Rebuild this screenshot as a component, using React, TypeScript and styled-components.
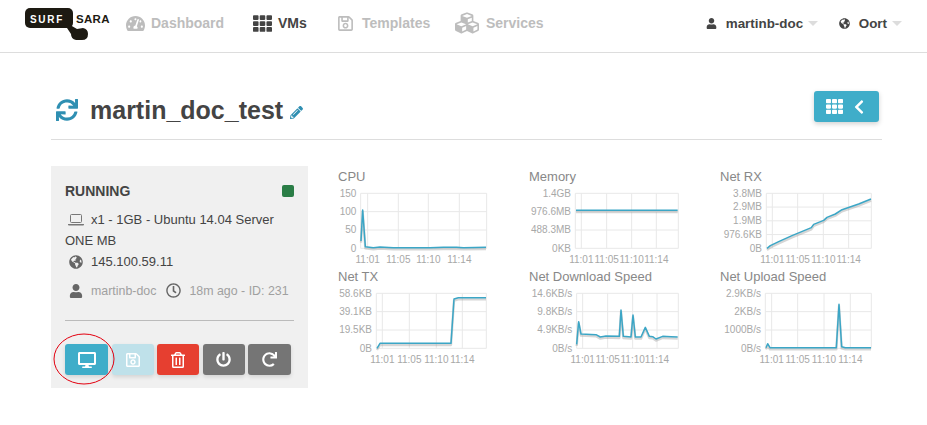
import styled, { createGlobalStyle } from 'styled-components';
import {
  FaTachometerAlt,
  FaTh,
  FaRegSave,
  FaCubes,
  FaUser,
  FaGlobeAmericas,
  FaSync,
  FaPencilAlt,
  FaChevronLeft,
  FaRegClock,
  FaDesktop,
  FaRegTrashAlt,
  FaPowerOff,
  FaRedo,
} from 'react-icons/fa';

const GlobalStyle = createGlobalStyle`
  html, body {
    margin: 0;
    padding: 0;
    background: #fff;
    font-family: "Liberation Sans", Arial, sans-serif;
    color: #444;
  }
`;

type ChartData = {
  title: string;
  left: number;
  right: number;
  xTicks: number[];
  yLabels: string[];
  line: string;
};

// coordinates are measured on a 3x grid, see the viewBox in Chart
const charts: ChartData[] = [
  {
    title: 'CPU',
    left: 92,
    right: 470,
    xTicks: [113, 205, 295, 388],
    yLabels: ['150', '100', '50', '0'],
    line: '93,228 98,135 106,245 130,248 150,246 190,248 300,248 340,247 380,247 400,248 468,247',
  },
  {
    title: 'Memory',
    left: 163,
    right: 472,
    xTicks: [181, 257, 332, 406],
    yLabels: ['1.4GB', '976.6MB', '488.3MB', '0KB'],
    line: '165,136 470,136',
  },
  {
    title: 'Net RX',
    left: 163,
    right: 478,
    xTicks: [181, 257, 334, 410],
    yLabels: ['3.8MB', '2.9MB', '1.9MB', '976.6KB', '0B'],
    line: '165,250 175,242 200,230 240,212 298,188 305,178 335,166 345,157 370,147 390,134 440,117 477,102',
  },
  {
    title: 'Net TX',
    left: 139,
    right: 469,
    xTicks: [157, 238, 319, 397],
    yLabels: ['58.6KB', '39.1KB', '19.5KB', '0B'],
    line: '141,250 150,235 363,235 372,102 385,98 468,98',
  },
  {
    title: 'Net Download Speed',
    left: 167,
    right: 472,
    xTicks: [185, 260, 335, 408],
    yLabels: ['14.6KB/s', '9.8KB/s', '4.9KB/s', '0B/s'],
    line: '167,238 173,170 180,207 225,209 238,216 255,213 295,214 300,135 307,214 330,216 336,150 343,216 360,216 373,187 385,214 395,215 405,222 425,214 450,215 470,216',
  },
  {
    title: 'Net Upload Speed',
    left: 160,
    right: 478,
    xTicks: [179, 257, 336, 415],
    yLabels: ['2.9KB/s', '2KB/s', '1000B/s', '0B/s'],
    line: '162,248 167,236 174,248 373,248 381,118 389,245 400,248 477,248',
  },
];

const xLabels = ['11:01', '11:05', '11:10', '11:14'];
const PLOT_TOP = 85;
const PLOT_BOTTOM = 250;

const Chart = ({ data }: { data: ChartData }) => {
  const step = (PLOT_BOTTOM - PLOT_TOP) / (data.yLabels.length - 1);
  return (
    <ChartCell>
      <ChartTitle>{data.title}</ChartTitle>
      <svg width="180" height="80" viewBox="0 60 540 240">
        <g stroke="#e8e8e8" strokeWidth="3" fill="none">
          {data.yLabels.map((_, i) => (
            <line
              key={i}
              x1={data.left}
              x2={data.right}
              y1={PLOT_TOP + i * step}
              y2={PLOT_TOP + i * step}
            />
          ))}
          <line x1={data.left} x2={data.left} y1={PLOT_TOP} y2={PLOT_BOTTOM} />
          <line x1={data.right} x2={data.right} y1={PLOT_TOP} y2={PLOT_BOTTOM} />
          {data.xTicks.map((x) => (
            <line key={x} x1={x} x2={x} y1={PLOT_TOP} y2={PLOT_BOTTOM} />
          ))}
        </g>
        <polyline
          points={data.line}
          fill="none"
          stroke="#999"
          strokeWidth="7"
          strokeOpacity="0.4"
          strokeLinejoin="round"
          transform="translate(0 5)"
        />
        <polyline
          points={data.line}
          fill="none"
          stroke="#3ba6c6"
          strokeWidth="4.5"
          strokeLinejoin="round"
        />
        <g fill="#a8a8a8" fontSize="30">
          {data.yLabels.map((label, i) => (
            <text
              key={label}
              x={data.left - 13}
              y={PLOT_TOP + i * step + 10}
              textAnchor="end"
            >
              {label}
            </text>
          ))}
          {data.xTicks.map((x, i) => (
            <text key={x} x={x} y={293} textAnchor="middle">
              {xLabels[i]}
            </text>
          ))}
        </g>
      </svg>
    </ChartCell>
  );
};

const Logo = () => (
  <LogoSvg width="86" height="34" viewBox="0 0 86 34">
    <rect x="0" y="0" width="48" height="20" rx="5" fill="#1d1a12" />
    <path d="M40 14 L52 21 L58 20 Q63 21 63 26 Q63 32 57 32 L51 32 Q46 31 46 26 L42 20 Z" fill="#1d1a12" />
    <text x="5" y="14.5" fontSize="10" fontWeight="700" letterSpacing="1.7" fill="#fff">
      SURF
    </text>
    <text x="51" y="14.5" fontSize="11.5" fontWeight="700" letterSpacing="0.3" fill="#1d1a12">
      SARA
    </text>
  </LogoSvg>
);

const LaptopIcon = () => (
  <svg width="16" height="12" viewBox="0 0 16 12">
    <rect x="2.5" y="0.5" width="11" height="8" rx="1" fill="none" stroke="currentColor" />
    <path d="M0 10h16v0.5q0 1-1 1H1q-1 0-1-1z" fill="currentColor" />
  </svg>
);

const App = () => {
  return (
    <Page>
      <GlobalStyle />
      <NavBar>
        <Logo />
        <NavLinks>
          <NavLink $gap={6} $width={127}>
            <FaTachometerAlt size={19} />
            Dashboard
          </NavLink>
          <NavLink $active $gap={6} $width={84}>
            <FaTh size={19} />
            VMs
          </NavLink>
          <NavLink $gap={8} $width={118}>
            <FaRegSave size={17} />
            Templates
          </NavLink>
          <NavLink $gap={7}>
            <FaCubes size={24} />
            Services
          </NavLink>
        </NavLinks>
        <NavRight>
          <NavMenu $width={133}>
            <FaUser size={11} />
            martinb-doc
            <Caret />
          </NavMenu>
          <NavMenu>
            <FaGlobeAmericas size={11} />
            Oort
            <Caret />
          </NavMenu>
        </NavRight>
      </NavBar>

      <Main>
        <Header>
          <StateIcon />
          <Title>martin_doc_test</Title>
          <EditIcon />
          <BackButton>
            <FaTh size={17} />
            <FaChevronLeft size={16} />
          </BackButton>
        </Header>

        <Content>
          <Panel>
            <PanelHead>
              RUNNING
              <StatusDot />
            </PanelHead>
            <InfoText>
              <LaptopIcon />
              x1 - 1GB - Ubuntu 14.04 Server ONE MB
            </InfoText>
            <IpRow>
              <FaGlobeAmericas size={14} />
              145.100.59.11
            </IpRow>
            <MetaRow>
              <FaUser size={14} />
              <span>martinb-doc</span>
              <FaRegClock size={15} />
              <span>18m ago - ID: 231</span>
            </MetaRow>
            <PanelRule />
            <Actions>
              <ActionButton $bg="#3fadc9" $width={43}>
                <FaDesktop size={18} />
              </ActionButton>
              <ActionButton $bg="#bfe1ea" $width={42}>
                <FaRegSave size={16} />
              </ActionButton>
              <ActionButton $bg="#e63f30" $width={42}>
                <FaRegTrashAlt size={16} />
              </ActionButton>
              <ActionButton $bg="#757575" $width={42}>
                <FaPowerOff size={15} />
              </ActionButton>
              <ActionButton $bg="#757575" $width={43}>
                <FaRedo size={15} />
              </ActionButton>
            </Actions>
            <Ring width="62" height="52" viewBox="0 0 62 52">
              <ellipse cx="31" cy="26" rx="30" ry="25" fill="none" stroke="#e3000f" strokeWidth="1" />
            </Ring>
          </Panel>
          <ChartGrid>
            {charts.map((c) => (
              <Chart key={c.title} data={c} />
            ))}
          </ChartGrid>
        </Content>
      </Main>
    </Page>
  );
};

export default App;

const Page = styled.div`
  width: 927px;
  height: 425px;
  overflow: hidden;
`;

const NavBar = styled.nav`
  display: flex;
  align-items: center;
  height: 53px;
  padding: 0 25px 6px;
  box-sizing: border-box;
  border-bottom: 1px solid #ddd;
`;

const LogoSvg = styled.svg`
  flex: none;
  margin-top: 3px;
`;

const NavLinks = styled.div`
  display: flex;
  align-items: center;
  margin-left: 15px;
`;

const NavLink = styled.a<{ $active?: boolean; $gap: number; $width?: number }>`
  display: flex;
  align-items: center;
  gap: ${(p) => p.$gap}px;
  width: ${(p) => (p.$width ? `${p.$width}px` : 'auto')};
  font-size: 14px;
  font-weight: 700;
  color: ${(p) => (p.$active ? '#444' : '#bdbdbd')};
`;

const NavRight = styled.div`
  display: flex;
  align-items: center;
  margin-left: auto;
`;

const NavMenu = styled.a<{ $width?: number }>`
  display: flex;
  align-items: center;
  gap: 9px;
  width: ${(p) => (p.$width ? `${p.$width}px` : 'auto')};
  font-size: 13.4px;
  font-weight: 700;
  color: #444;
`;

const Caret = styled.span`
  width: 0;
  height: 0;
  margin-left: -4px;
  border-left: 5px solid transparent;
  border-right: 5px solid transparent;
  border-top: 5px solid #ddd;
`;

const Main = styled.main`
  padding: 38px 45px 0 51px;
`;

const Header = styled.header`
  display: flex;
  align-items: center;
  height: 38px;
  padding-bottom: 10px;
  border-bottom: 1px solid #ddd;
`;

const StateIcon = styled(FaSync)`
  width: 22px;
  height: 22px;
  margin-left: 5px;
  color: #2f8fb2;
`;

const Title = styled.h1`
  margin: 0 0 0 12px;
  font-size: 25px;
  font-weight: 700;
  color: #444;
`;

const EditIcon = styled(FaPencilAlt)`
  width: 13px;
  height: 13px;
  margin: 4px 0 0 7px;
  color: #2f8fb2;
`;

const BackButton = styled.button`
  display: flex;
  align-items: center;
  justify-content: center;
  gap: 8px;
  width: 65px;
  height: 31px;
  margin: -7px 3px 0 auto;
  padding: 0;
  border: none;
  border-radius: 3px;
  background: #3fadc9;
  color: #fff;
  box-shadow: 0 2px 5px rgba(0, 0, 0, 0.18);
`;

const Content = styled.div`
  display: flex;
  align-items: flex-start;
  margin-top: 26px;
`;

const Panel = styled.section`
  position: relative;
  flex: none;
  width: 257px;
  height: 222px;
  box-sizing: border-box;
  padding: 14px 14px 0;
  background: #f0f0f0;
`;

const PanelHead = styled.div`
  display: flex;
  align-items: center;
  justify-content: space-between;
  height: 21px;
  font-size: 14px;
  font-weight: 700;
  color: #444;
`;

const StatusDot = styled.span`
  width: 12px;
  height: 12px;
  border-radius: 2px;
  background: #2a7d46;
`;

const InfoText = styled.div`
  margin-top: 8px;
  font-size: 13px;
  line-height: 21px;
  color: #444;

  svg {
    margin: 0 7px 0 3px;
    vertical-align: -2px;
    color: #777;
  }
`;

const IpRow = styled.div`
  display: flex;
  align-items: center;
  gap: 8px;
  height: 21px;
  padding-left: 4px;
  font-size: 13px;
  color: #444;

  svg {
    color: #666;
  }
`;

const MetaRow = styled.div`
  display: flex;
  align-items: center;
  height: 21px;
  margin-top: 8px;
  padding-left: 4px;
  font-size: 12.4px;
  white-space: nowrap;
  color: #a0a0a0;

  svg {
    flex: none;
    color: #666;
  }

  span {
    margin-left: 8px;
  }

  span + svg {
    margin-left: 10px;
  }
`;

const PanelRule = styled.hr`
  margin: 19px 0 0;
  border: none;
  border-top: 1px solid #bbb;
`;

const Actions = styled.div`
  display: flex;
  gap: 3.5px;
  margin-top: 23px;
`;

const ActionButton = styled.button<{ $bg: string; $width: number }>`
  display: flex;
  align-items: center;
  justify-content: center;
  width: ${(p) => p.$width}px;
  height: 31px;
  padding: 0;
  border: none;
  border-radius: 3px;
  background: ${(p) => p.$bg};
  color: #fff;
  box-shadow: 0 2px 4px rgba(0, 0, 0, 0.12);
`;

const Ring = styled.svg`
  position: absolute;
  left: 2px;
  top: 167px;
  pointer-events: none;
`;

const ChartGrid = styled.div`
  display: grid;
  grid-template-columns: repeat(3, 191px);
  grid-auto-rows: 100px;
  margin: -1px 0 0 22px;
`;

const ChartCell = styled.div`
  display: flex;
  flex-direction: column;

  svg {
    display: block;
    flex: none;
  }
`;

const ChartTitle = styled.div`
  height: 20px;
  padding-left: 8px;
  font-size: 13px;
  line-height: 23px;
  color: #888;
`;
